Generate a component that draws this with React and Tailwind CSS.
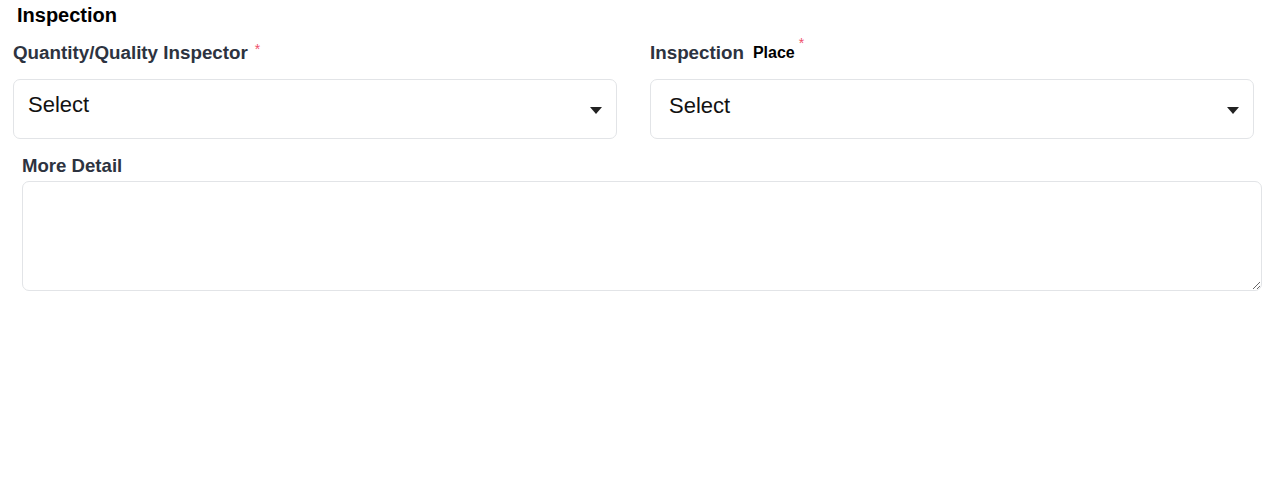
function Caret() {
  return (
    <svg width="12" height="7" viewBox="0 0 12 7" className="shrink-0">
      <path d="M0 0 L12 0 L6 7 Z" fill="#222" />
    </svg>
  );
}

function SelectBox({ textClass }) {
  return (
    <div className="h-[60px] rounded-[7px] border border-[#e2e4e7] bg-white flex items-center justify-between pr-[14px]">
      <span className={`text-[22px] text-[#111] ${textClass}`}>Select</span>
      <div className="mt-[3px]">
        <Caret />
      </div>
    </div>
  );
}

export default function App() {
  return (
    <div
      className="w-[1280px] h-[492px] bg-white relative overflow-hidden"
      style={{ fontFamily: '"Liberation Sans", Arial, sans-serif' }}
    >
      <div className="pl-[17px] pt-[3px] h-[26px]">
        <h2 className="text-[20px] font-bold text-black leading-[24px]">Inspection</h2>
      </div>

      <div className="grid grid-cols-2 gap-[33px] pl-[13px] pr-[26px] mt-[15px]">
        <div>
          <div className="flex items-start h-[24px]">
            <label className="text-[18.8px] font-bold text-[#2d3340] leading-[24px]">
              Quantity/Quality Inspector
            </label>
            <span className="text-[#ef4f6b] text-[14px] ml-[7px] leading-[16px]">*</span>
          </div>
          <div className="mt-[14px]">
            <SelectBox textClass="ml-[14px] -mt-[10px]" />
          </div>
        </div>
        <div>
          <div className="flex items-start h-[24px]">
            <label className="text-[18.8px] font-bold text-[#2d3340] leading-[24px]">
              Inspection
            </label>
            <span className="text-[16px] font-bold text-black leading-[22px] ml-[9px] mt-[1px]">Place</span>
            <span className="text-[#ef4f6b] text-[14px] ml-[4px] leading-[10px] -mt-[3px]">*</span>
          </div>
          <div className="mt-[14px]">
            <SelectBox textClass="ml-[18px] -mt-[8px]" />
          </div>
        </div>
      </div>

      <div className="pl-[22px] pr-[18px] mt-[16px]">
        <label className="block text-[18.6px] font-bold text-[#2d3340] leading-[22px]">More Detail</label>
        <textarea className="block mt-[4px] w-full h-[110px] rounded-[7px] border border-[#e2e4e7] bg-white outline-none" />
      </div>
    </div>
  );
}
